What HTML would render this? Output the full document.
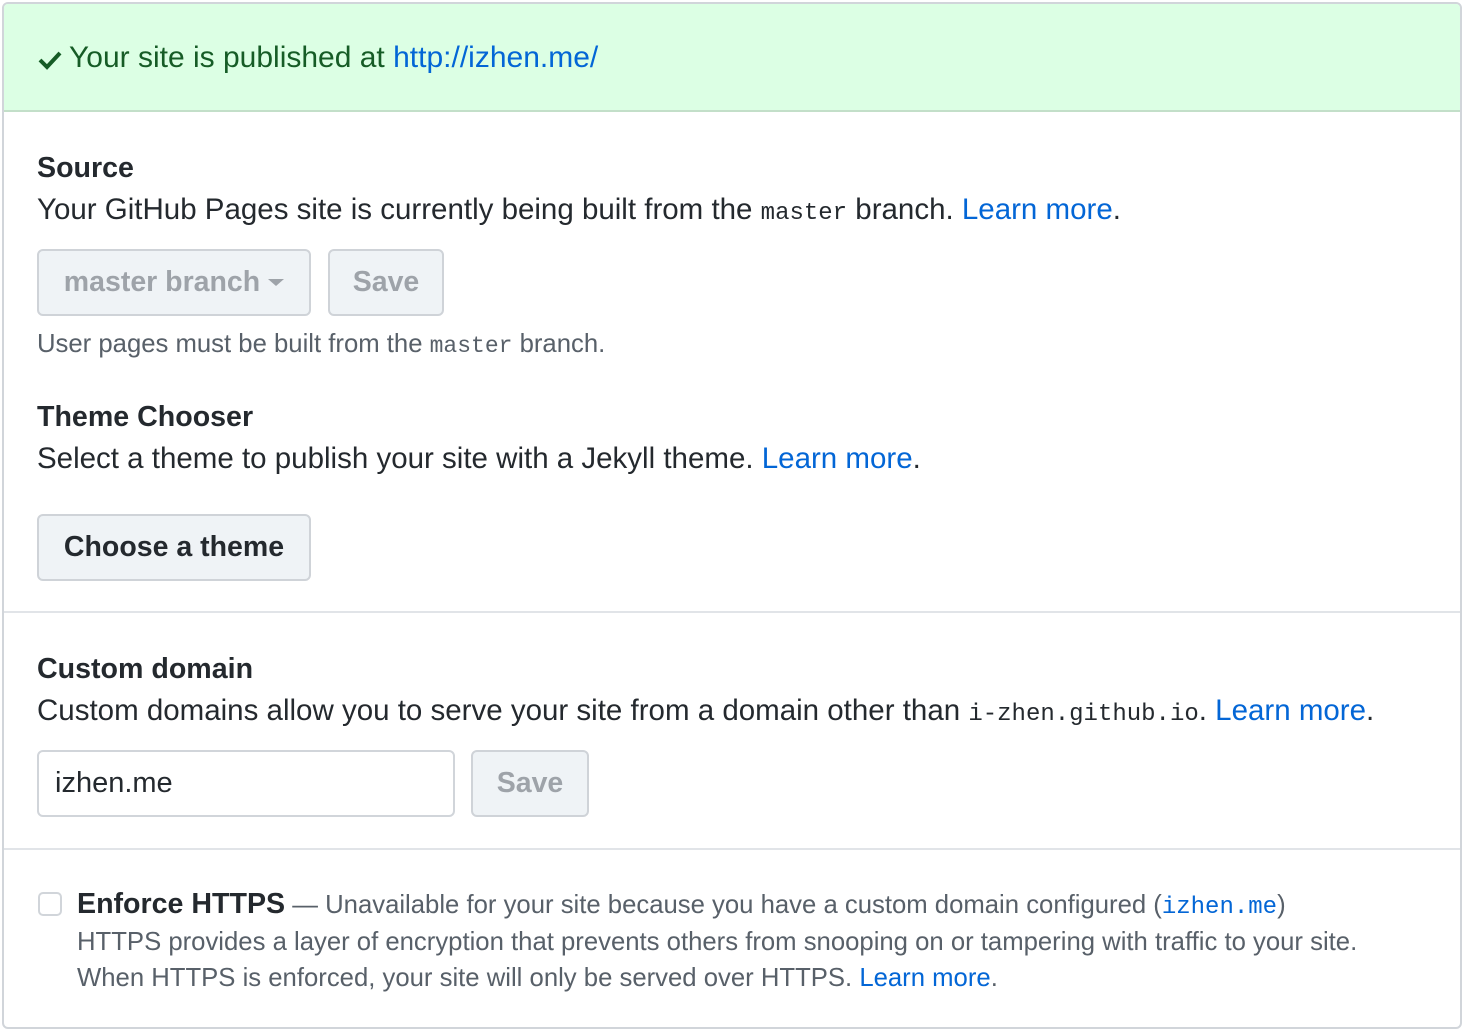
<!DOCTYPE html>
<html><head><meta charset="utf-8">
<style>
*{margin:0;padding:0;box-sizing:border-box}
body{width:1464px;height:1030px;background:#fff;font-family:"Liberation Sans",sans-serif;color:#24292e;position:relative;overflow:hidden}
.box{position:absolute;left:2px;top:2px;width:1460px;height:1027px;border:2px solid #d1d5da;border-radius:6px;overflow:hidden}
.flash{position:absolute;left:0;top:0;width:100%;height:108px;background:#dcffe4;border-bottom:2px solid #c3dfc9}
.t{position:absolute;white-space:nowrap;font-size:29.5px;line-height:36px}
.b{font-weight:bold;font-size:28.6px}
a{color:#0366d6;text-decoration:none}
code{font-family:"Liberation Mono",monospace;font-size:24px}
.btn{position:absolute;border:2px solid #cfd3d8;border-radius:6px;background:#eff3f6;font-weight:bold;font-size:28.5px;display:flex;align-items:center;justify-content:center}
.dis{color:#9ea3a9;background:#eff3f6}
.hr{position:absolute;left:0;width:100%;height:2px;background:#e1e4e8}
.g{color:#586069;font-size:25.7px}
</style></head><body>
<div class="box">
 <div class="flash"></div>
 <svg style="position:absolute;left:34px;top:46px" width="24" height="20" viewBox="0 0 24 20"><path d="M2 10 L9 17 L22 3" fill="none" stroke="#165c26" stroke-width="4"/></svg>
 <div class="t" style="left:65px;top:36px;color:#165c26;font-size:30px">Your site is published at <a href="#">http://izhen.me/</a></div>

 <div class="t b" style="left:33px;top:146px">Source</div>
 <div class="t" style="left:33px;top:188px">Your GitHub Pages site is currently being built from the <code>master</code> branch. <a href="#">Learn more</a>.</div>
 <div class="btn dis" style="left:33px;top:245px;width:274px;height:67px">master branch <span style="display:inline-block;margin-left:8px;border-left:8px solid transparent;border-right:8px solid transparent;border-top:7px solid #9ea3a9"></span></div>
 <div class="btn dis" style="left:324px;top:245px;width:116px;height:67px">Save</div>
 <div class="t g" style="left:33px;top:322px">User pages must be built from the <code style="font-size:23px">master</code> branch.</div>

 <div class="t b" style="left:33px;top:395px">Theme Chooser</div>
 <div class="t" style="left:33px;top:437px">Select a theme to publish your site with a Jekyll theme. <a href="#">Learn more</a>.</div>
 <div class="btn" style="left:33px;top:510px;width:274px;height:67px;color:#24292e">Choose a theme</div>
 <div class="hr" style="top:607px"></div>

 <div class="t b" style="left:33px;top:647px">Custom domain</div>
 <div class="t" style="left:33px;top:689px">Custom domains allow you to serve your site from a domain other than <code>i-zhen.github.io</code>. <a href="#">Learn more</a>.</div>
 <div style="position:absolute;left:33px;top:746px;width:418px;height:67px;border:2px solid #d1d5da;border-radius:6px;font-size:29px;padding-left:16px;line-height:63px">izhen.me</div>
 <div class="btn dis" style="left:467px;top:746px;width:118px;height:67px">Save</div>
 <div class="hr" style="top:844px"></div>

 <div style="position:absolute;left:34px;top:888px;width:24px;height:24px;border:2px solid #d1d5da;border-radius:5px"></div>
 <div class="t" style="left:73px;top:882px;color:#586069;font-size:25.7px"><span class="b" style="color:#24292e;font-size:28.6px">Enforce HTTPS</span> — Unavailable for your site because you have a custom domain configured (<a href="#"><code style="font-size:24px">izhen.me</code></a>)</div>
 <div class="t g" style="left:73px;top:920px">HTTPS provides a layer of encryption that prevents others from snooping on or tampering with traffic to your site.</div>
 <div class="t g" style="left:73px;top:956px">When HTTPS is enforced, your site will only be served over HTTPS. <a href="#">Learn more</a>.</div>
</div>
</body></html>
